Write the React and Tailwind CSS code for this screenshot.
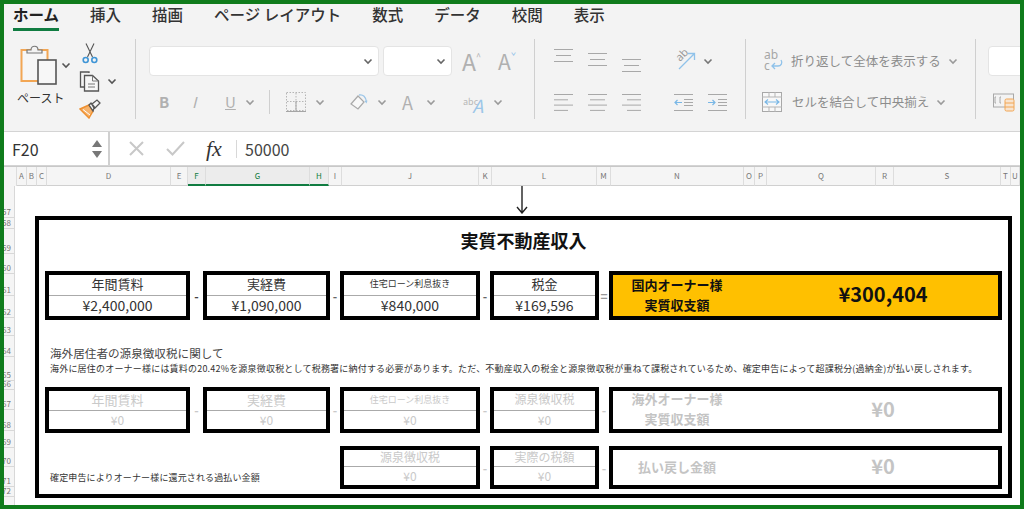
import React from "react";

const JP = "[font-family:'Noto_Sans_CJK_JP','Noto_Sans',sans-serif]";

const tabs = ["挿入", "描画", "ページ レイアウト", "数式", "データ", "校閲", "表示"];

// label, width of each column header
const columns = [
  ["A", 10], ["B", 10], ["C", 10], ["D", 124], ["E", 17], ["F", 18], ["G", 104], ["H", 19],
  ["I", 13], ["J", 137], ["K", 13], ["L", 105], ["M", 14], ["N", 133], ["O", 11], ["P", 12],
  ["Q", 109], ["R", 18], ["S", 107], ["T", 10], ["U", 9],
];

// row number, height
const rows = [
  [57, 32], [58, 11], [59, 25], [60, 20], [61, 22], [62, 22], [63, 18], [64, 21],
  [65, 24], [66, 9], [67, 20], [68, 21], [69, 17], [70, 19], [71, 20], [72, 10],
];

function Chevron({ className = "", color = "#9a9a9a" }) {
  return (
    <svg width="10" height="7" viewBox="0 0 10 7" className={`shrink-0 ${className}`}>
      <path d="M1.5 1.5 5 5l3.5-3.5" fill="none" stroke={color} strokeWidth="1.6" />
    </svg>
  );
}

function Sep({ className = "h-[24px]" }) {
  return <div className={`w-px shrink-0 bg-[#cfcfcf] ${className}`} />;
}

function Lines({ widths, gap = 6, className = "" }) {
  return (
    <svg width="19" height="20" viewBox="0 0 19 20" className={`shrink-0 ${className}`}>
      {widths.map(([x1, x2], i) => (
        <line key={i} x1={x1} x2={x2} y1={2.5 + i * gap} y2={2.5 + i * gap} stroke="#a8a8a8" strokeWidth="1" />
      ))}
    </svg>
  );
}

function PasteIcon() {
  return (
    <svg width="37" height="41" viewBox="0 0 37 41" className="shrink-0">
      <rect x="1.5" y="6" width="26" height="31" fill="#f6f6f6" stroke="#f2a654" strokeWidth="2" />
      <path d="M7 9V6h4c0-5 7-5 7 0h4v3z" fill="#f3f3f3" stroke="#777" strokeWidth="1.2" />
      <rect x="18" y="16" width="18" height="24" fill="#f7f7f7" stroke="#555" strokeWidth="1.6" />
    </svg>
  );
}

function ScissorsIcon() {
  return (
    <svg width="16" height="21" viewBox="0 0 16 21">
      <path d="M4 0.5 10.5 14M12 0.5 5.5 14" stroke="#555" strokeWidth="1.1" fill="none" />
      <circle cx="3.7" cy="17" r="2.5" fill="none" stroke="#3f95d6" strokeWidth="1.6" />
      <circle cx="12.3" cy="17" r="2.5" fill="none" stroke="#3f95d6" strokeWidth="1.6" />
    </svg>
  );
}

function CopyIcon() {
  return (
    <svg width="22" height="21" viewBox="0 0 22 21">
      <path d="M10 2V1H1.5v15H5" fill="none" stroke="#555" strokeWidth="1.3" />
      <path d="M5.5 4.5h8l6 5.5v10h-14z" fill="#f7f7f7" stroke="#555" strokeWidth="1.3" />
      <path d="M13.5 4.5v5.5h6M9 13h7M9 16h7" fill="none" stroke="#777" strokeWidth="1" />
    </svg>
  );
}

function BrushIcon() {
  return (
    <svg width="22" height="20" viewBox="0 0 22 20">
      <path d="M1 10 10 6l4 6-4 7z" fill="#f6b26b" stroke="#ee8f2e" strokeWidth="1.4" />
      <path d="M4 10.5 11 16" stroke="#fff" strokeWidth="1" />
      <path d="M10 6l2-2 3 5-1 3zM13 5l5-4 3 3-5 5z" fill="#f5f5f5" stroke="#555" strokeWidth="1.3" />
    </svg>
  );
}

function BorderIcon() {
  return (
    <svg width="20" height="20" viewBox="0 0 20 20" className="ml-[16px] shrink-0">
      <rect x="0.5" y="0.5" width="19" height="18" fill="none" stroke="#b5b5b5" strokeDasharray="1.5 1.5" />
      <path d="M10 1v17M1 9.5h18" stroke="#b5b5b5" strokeDasharray="1.5 1.5" />
      <path d="M10 9v10M0 19.5h20" stroke="#a5a5a5" />
    </svg>
  );
}

function FillIcon() {
  return (
    <svg width="18" height="17" viewBox="0 0 18 17">
      <path d="M1 10 8 2l6 6-6 7z" fill="#f8f8f8" stroke="#a9a9a9" strokeWidth="1.2" />
      <path d="M9 1c4-1 7 2 7.5 7" fill="none" stroke="#9cc6e8" strokeWidth="1.3" />
      <path d="M14.5 7l2 2.5 1-3z" fill="#9cc6e8" />
    </svg>
  );
}

function OrientIcon() {
  return (
    <svg width="22" height="21" viewBox="0 0 22 21" className="overflow-visible">
      <text transform="translate(6 13) rotate(-45)" fontSize="11" fill="#999" fontFamily="Noto Sans">ab</text>
      <path d="M5 20 20 5M14 4.500h6.500v6.500" fill="none" stroke="#8fc2ea" strokeWidth="1.3" />
    </svg>
  );
}

function IndentIcon({ flip }) {
  return (
    <svg width="19" height="17" viewBox="0 0 19 17">
      <path d="M0 0.5h19M0 16.5h19M10 5.5h9M10 8.5h9M10 11.5h9" stroke="#a8a8a8" />
      <path d={flip ? "M0 8.5h7M4.5 6l2.5 2.5-2.5 2.5" : "M1 8.5h7M3.5 6 1 8.5 3.5 11"} fill="none" stroke="#79b7e6" strokeWidth="1.2" />
    </svg>
  );
}

function WrapIcon() {
  return (
    <svg width="20" height="24" viewBox="0 0 20 24" className="shrink-0">
      <text x="0" y="10" fontSize="12" fill="#a6a6a6" fontFamily="Noto Sans">ab</text>
      <text x="0" y="21" fontSize="12" fill="#a6a6a6" fontFamily="Noto Sans">c</text>
      <path d="M17 11c2 3 0 6-3 6H8M11 14l-3 3 3 3" fill="none" stroke="#8fc2ea" strokeWidth="1.3" />
    </svg>
  );
}

function MergeIcon() {
  return (
    <svg width="20" height="20" viewBox="0 0 20 20" className="shrink-0">
      <rect x="0.5" y="0.5" width="19" height="19" fill="#f8f8f8" stroke="#a8a8a8" />
      <path d="M0 5h20M0 15h20M7 15v5M13 15v5M7 0v5M13 0v5" stroke="#b5b5b5" />
      <path d="M3 10h14M6 7.5 3 10l3 2.5M14 7.5l3 2.5-3 2.5" fill="none" stroke="#79b7e6" strokeWidth="1.1" />
    </svg>
  );
}

function CondIcon() {
  return (
    <svg width="22" height="19" viewBox="0 0 22 19">
      <rect x="0.5" y="1" width="20" height="13" fill="none" stroke="#a8a8a8" />
      <path d="M3 4H2v6h1M8 4H7v6h1" fill="none" stroke="#a8a8a8" />
      <rect x="12" y="6" width="9" height="12" rx="1.5" fill="#f8e4cf" stroke="#f2a654" />
      <path d="M12 10h9M12 14h9" stroke="#f2a654" />
    </svg>
  );
}

function Ribbon() {
  return (
    <div className="flex h-[95px] shrink-0 bg-[#f3f3f3] pt-[3px]">
      {/* clipboard */}
      <div className="flex w-[131px] shrink-0 pl-[13px] pt-[5px]">
        <div className="flex w-[58px] flex-col items-start">
          <div className="flex w-full items-start pl-[3px]">
            <PasteIcon />
            <Chevron color="#555" className="ml-[4px] mt-[18px]" />
          </div>
          <div className="mt-[5px] whitespace-nowrap text-[12px] leading-[16px] text-[#333]">ペースト</div>
        </div>
        <div className="-mt-[1px] ml-[7px] flex flex-col">
          <ScissorsIcon />
          <div className="ml-[-3px] mt-[7px] flex items-center gap-[6px]">
            <CopyIcon />
            <Chevron color="#555" />
          </div>
          <div className="ml-[-3px] mt-[7px]">
            <BrushIcon />
          </div>
        </div>
      </div>
      <Sep className="h-[80px]" />
      {/* font */}
      <div className="flex w-[398px] shrink-0 flex-col pl-[13px] pt-[7px]">
        <div className="flex h-[30px] items-center">
          <div className="flex h-[30px] w-[230px] items-center justify-end rounded-[4px] border border-[#e4e4e4] bg-white pr-[5px]">
            <Chevron color="#666" />
          </div>
          <div className="ml-[4px] flex h-[30px] w-[69px] items-center justify-end rounded-[4px] border border-[#e4e4e4] bg-white pr-[5px]">
            <Chevron color="#666" />
          </div>
          <span className="ml-[10px] text-[23px] leading-none text-[#b0b0b0]">A</span>
          <span className="-mt-[10px] text-[9px] leading-none text-[#b0b0b0]">^</span>
          <span className="ml-[17px] text-[21px] leading-none text-[#b0b0b0]">A</span>
          <span className="-mt-[10px] text-[9px] leading-none text-[#8fc2ea]">ˇ</span>
        </div>
        <div className="mt-[14px] flex h-[24px] items-center">
          <span className="ml-[10px] w-[28px] text-[15px] font-bold text-[#b0b0b0]">B</span>
          <span className="ml-[5px] w-[28px] text-[15px] italic text-[#b0b0b0]">I</span>
          <span className="ml-[5px] w-[16px] text-[15px] text-[#b0b0b0] underline">U</span>
          <Chevron className="ml-[4px]" />
          <Sep className="ml-[14px] h-[24px]" />
          <BorderIcon />
          <Chevron className="ml-[9px]" />
          <Sep className="ml-[13px]" />
          <div className="ml-[11px]"><FillIcon /></div>
          <Chevron className="ml-[9px]" />
          <span className="ml-[15px] w-[16px] text-[18px] text-[#b0b0b0]">A</span>
          <Chevron className="ml-[8px]" />
          <Sep className="ml-[12px]" />
          <div className="ml-[14px] flex h-[24px] w-[24px] items-end">
            <span className="mb-[8px] text-[9px] leading-none text-[#b8b8b8]">abc</span>
            <span className="-ml-[6px] text-[18px] italic leading-none text-[#9cc6e8]">A</span>
          </div>
          <Chevron className="ml-[6px]" />
        </div>
      </div>
      <Sep className="h-[80px]" />
      {/* alignment */}
      <div className="flex w-[210px] shrink-0 flex-col pl-[19px] pt-[7px]">
        <div className="flex h-[30px] items-start">
          <Lines widths={[[0, 19], [2, 17], [0, 19]]} className="mt-[1px]" />
          <Lines widths={[[0, 19], [2, 17], [0, 19]]} className="ml-[15px] mt-[5px]" />
          <Lines widths={[[0, 19], [2, 17], [0, 19]]} className="ml-[15px] mt-[11px]" />
          <Sep className="ml-[16px] mt-[4px]" />
          <div className="ml-[16px] mt-[3px]"><OrientIcon /></div>
          <Chevron color="#777" className="ml-[7px] mt-[12px]" />
        </div>
        <div className="mt-[14px] flex h-[24px] items-center">
          <Lines gap={5.3} widths={[[0, 19], [0, 14], [0, 19], [0, 14]]} />
          <Lines gap={5.3} widths={[[0, 19], [2, 17], [0, 19], [2, 17]]} className="ml-[15px]" />
          <Lines gap={5.3} widths={[[0, 19], [5, 19], [0, 19], [5, 19]]} className="ml-[15px]" />
          <Sep className="ml-[16px]" />
          <div className="ml-[16px] flex gap-[15px]">
            <IndentIcon />
            <IndentIcon flip />
          </div>
        </div>
      </div>
      <Sep className="h-[80px]" />
      {/* wrap and merge */}
      <div className="flex w-[229px] shrink-0 flex-col pl-[16px] pt-[7px]">
        <div className="flex h-[30px] items-center">
          <div className="ml-[2px]"><WrapIcon /></div>
          <span className="ml-[7px] whitespace-nowrap text-[12.5px] text-[#8c8c8c]">折り返して全体を表示する</span>
          <Chevron className="ml-[7px]" />
        </div>
        <div className="mt-[14px] flex h-[24px] items-center">
          <MergeIcon />
          <span className="ml-[10px] whitespace-nowrap text-[12.5px] text-[#8c8c8c]">セルを結合して中央揃え</span>
          <Chevron className="ml-[7px]" />
        </div>
      </div>
      <Sep className="h-[80px]" />
      {/* number */}
      <div className="flex min-w-0 flex-1 flex-col overflow-hidden pl-[12px] pt-[7px]">
        <div className="h-[30px] w-[60px] rounded-[4px] border border-[#e4e4e4] bg-white" />
        <div className="ml-[5px] mt-[14px] flex h-[24px] items-center">
          <CondIcon />
        </div>
      </div>
    </div>
  );
}

function FormulaBar() {
  return (
    <div className="flex h-[35px] shrink-0 border-y border-[#d4d4d4] bg-white">
      <div className="flex w-[106px] shrink-0 items-center justify-between border-r-2 border-[#d0d0d0] pl-[8px] pr-[6px]">
        <span className="text-[16px] text-[#333]">F20</span>
        <div className="flex flex-col gap-[4px]">
          <div className="h-0 w-0 border-x-[5px] border-b-[7px] border-x-transparent border-b-[#777]" />
          <div className="h-0 w-0 border-x-[5px] border-t-[7px] border-x-transparent border-t-[#777]" />
        </div>
      </div>
      <div className="flex items-center pl-[19px]">
        <svg width="15" height="15" viewBox="0 0 15 15">
          <path d="M1 1l13 13M14 1 1 14" stroke="#c8c8c8" strokeWidth="2" />
        </svg>
        <svg width="19" height="15" viewBox="0 0 19 15" className="ml-[22px]">
          <path d="M1 8l5.5 5.500L18 1" fill="none" stroke="#c8c8c8" strokeWidth="2" />
        </svg>
        <span className="ml-[21px] w-[21px] text-[22px] italic leading-none text-[#333] [font-family:'Liberation_Serif',serif]">fx</span>
        <div className="ml-[9px] h-[18px] w-px bg-[#d8d8d8]" />
        <span className="ml-[8px] text-[16px] text-[#444]">50000</span>
      </div>
    </div>
  );
}

function ColumnHeaders() {
  return (
    <div className="flex h-[20px] shrink-0 border-t border-[#c8c8c8] bg-[#f5f5f5]">
      <div className="w-[13px] shrink-0 border-r border-[#ddd]" />
      {columns.map(([name, width]) => {
        const selected = name === "F" || name === "G" || name === "H";
        return (
          <div
            key={name}
            style={{ width }}
            className={`flex shrink-0 items-center justify-center border-r text-[8px] ${
              selected
                ? "border-b-2 border-r-[#ddd] border-b-[#107c41] bg-[#ececec] text-[#107c41]"
                : "border-b border-r-[#ddd] border-b-[#d0d0d0] text-[#777]"
            }`}
          >
            {name}
          </div>
        );
      })}
    </div>
  );
}

function RowHeaders() {
  return (
    <div className="w-[11px] shrink-0 overflow-hidden border-r border-[#d8d8d8] bg-[#f5f5f5]">
      {rows.map(([n, h]) => (
        <div key={n} style={{ height: h }} className="flex items-end border-b border-[#d8d8d8]">
          <span className="-ml-[2px] block h-[10px] text-[8px] leading-[10px] text-[#777]">{n}</span>
        </div>
      ))}
    </div>
  );
}

function Box({ width, label, value, labelSize = "text-[13px]", muted, h, top }) {
  const text = muted ? "text-[#c9c9c9]" : "text-[#333]";
  return (
    <div className={`flex shrink-0 flex-col border-[4px] border-black bg-white ${width} ${h}`}>
      <div className={`flex shrink-0 items-center justify-center border-b border-[#aaa] pb-[3px] leading-none ${top} ${text} ${labelSize}`}>
        {label}
      </div>
      <div className={`flex flex-1 items-center justify-center leading-none ${text} ${muted ? "pb-[1px] text-[12px]" : "pb-[3px] text-[14px]"}`}>{value}</div>
    </div>
  );
}

function Op({ width, char = "-", color = "text-[#c9c9c9]" }) {
  return <div className={`flex shrink-0 items-center justify-center text-[12px] font-bold ${width} ${color}`}>{char}</div>;
}

function TotalBox({ lines, value, muted, h, bg = "bg-white" }) {
  const text = muted ? "text-[#c4c4c4]" : "text-[#111]";
  return (
    <div className={`flex min-w-0 flex-1 items-center border-[4px] border-black ${bg} ${h}`}>
      <div className={`mb-[2px] flex w-[128px] shrink-0 flex-col items-center text-[13px] font-bold leading-[20px] ${text}`}>
        {lines.map((l) => (
          <span key={l}>{l}</span>
        ))}
      </div>
      <div className={`mb-[3px] ml-[27px] flex-1 text-center text-[20px] font-bold ${text}`}>{value}</div>
    </div>
  );
}

function Panel() {
  return (
    <div className="ml-[20px] flex h-[282px] w-[977px] flex-col border-[4px] border-black px-[6px]">
      <div className="mt-[7px] h-[27px] text-center text-[18px] font-bold leading-[27px] text-[#111]">実質不動産収入</div>
      <div className="mt-[17px] flex">
        <Box width="w-[145px]" h="h-[49px]" top="h-[21px]" label="年間賃料" value="¥2,400,000" />
        <Op width="w-[13px]" color="text-[#444]" />
        <Box width="w-[127px]" h="h-[49px]" top="h-[21px]" label="実経費" value="¥1,090,000" />
        <Op width="w-[10px]" color="text-[#666]" />
        <Box width="w-[140px]" h="h-[49px]" top="h-[21px]" labelSize="text-[9px]" label="住宅ローン利息抜き" value="¥840,000" />
        <Op width="w-[10px]" color="text-[#666]" />
        <Box width="w-[109px]" h="h-[49px]" top="h-[21px]" label="税金" value="¥169,596" />
        <Op width="w-[10px]" char="=" color="text-[#999]" />
        <TotalBox h="h-[49px]" bg="bg-[#ffc000]" lines={["国内オーナー様", "実質収支額"]} value="¥300,404" />
      </div>
      <div className="ml-[5px] mt-[24px] text-[11.6px] leading-[18px] text-[#444]">海外居住者の源泉徴収税に関して</div>
      <div className="ml-[5px] whitespace-nowrap text-[9px] leading-[13px] tracking-[0.2px] text-[#333]">
        海外に居住のオーナー様には賃料の20.42%を源泉徴収税として税務署に納付する必要があります。ただ、不動産収入の税金と源泉徴収税が重ねて課税されているため、確定申告によって超課税分(過納金)が払い戻しされます。
      </div>
      <div className="mt-[12px] flex">
        <Box muted width="w-[145px]" h="h-[46px]" top="h-[20px]" label="年間賃料" value="¥0" />
        <Op width="w-[13px]" />
        <Box muted width="w-[127px]" h="h-[46px]" top="h-[20px]" label="実経費" value="¥0" />
        <Op width="w-[10px]" />
        <Box muted labelSize="text-[9px]" width="w-[140px]" h="h-[46px]" top="h-[20px]" label="住宅ローン利息抜き" value="¥0" />
        <Op width="w-[10px]" />
        <Box muted labelSize="text-[12px]" width="w-[109px]" h="h-[46px]" top="h-[20px]" label="源泉徴収税" value="¥0" />
        <Op width="w-[10px]" />
        <TotalBox muted h="h-[46px]" lines={["海外オーナー様", "実質収支額"]} value="¥0" />
      </div>
      <div className="mt-[13px] flex">
        <div className="flex w-[295px] shrink-0 items-end pb-[5px] pl-[5px] text-[9px] leading-[13px] tracking-[0.13px] text-[#333]">
          確定申告によりオーナー様に還元される過払い金額
        </div>
        <Box muted labelSize="text-[12px]" width="w-[140px]" h="h-[43px]" top="h-[17px]" label="源泉徴収税" value="¥0" />
        <Op width="w-[10px]" />
        <Box muted labelSize="text-[12px]" width="w-[109px]" h="h-[43px]" top="h-[17px]" label="実際の税額" value="¥0" />
        <Op width="w-[10px]" />
        <TotalBox muted h="h-[43px]" lines={["払い戻し金額"]} value="¥0" />
      </div>
    </div>
  );
}

export default function App() {
  return (
    <div className={`flex h-[509px] w-[1024px] flex-col overflow-hidden border-[4px] border-[#107c1c] bg-white ${JP}`}>
      {/* tabs */}
      <div className="flex h-[32px] shrink-0 gap-[31px] bg-[#f3f3f3] pl-[9px]">
        <div className="flex h-[27px] flex-col border-b-[3px] border-[#107c41] text-[15.5px] font-bold leading-[21px] text-[#222]">ホーム</div>
        {tabs.map((t) => (
          <div key={t} className="whitespace-nowrap text-[15.5px] font-medium leading-[21px] text-[#333]">
            {t}
          </div>
        ))}
      </div>
      <Ribbon />
      <FormulaBar />
      <ColumnHeaders />
      <div className="flex min-h-0 flex-1">
        <RowHeaders />
        <div className="flex min-w-0 flex-1 flex-col">
          <div className="flex h-[30px] shrink-0 justify-center pl-[9px]">
            <svg width="12" height="28" viewBox="0 0 12 28">
              <path d="M6 0v27M1 21l5 6 5-6" fill="none" stroke="#222" strokeWidth="1.4" />
            </svg>
          </div>
          <Panel />
        </div>
      </div>
    </div>
  );
}
